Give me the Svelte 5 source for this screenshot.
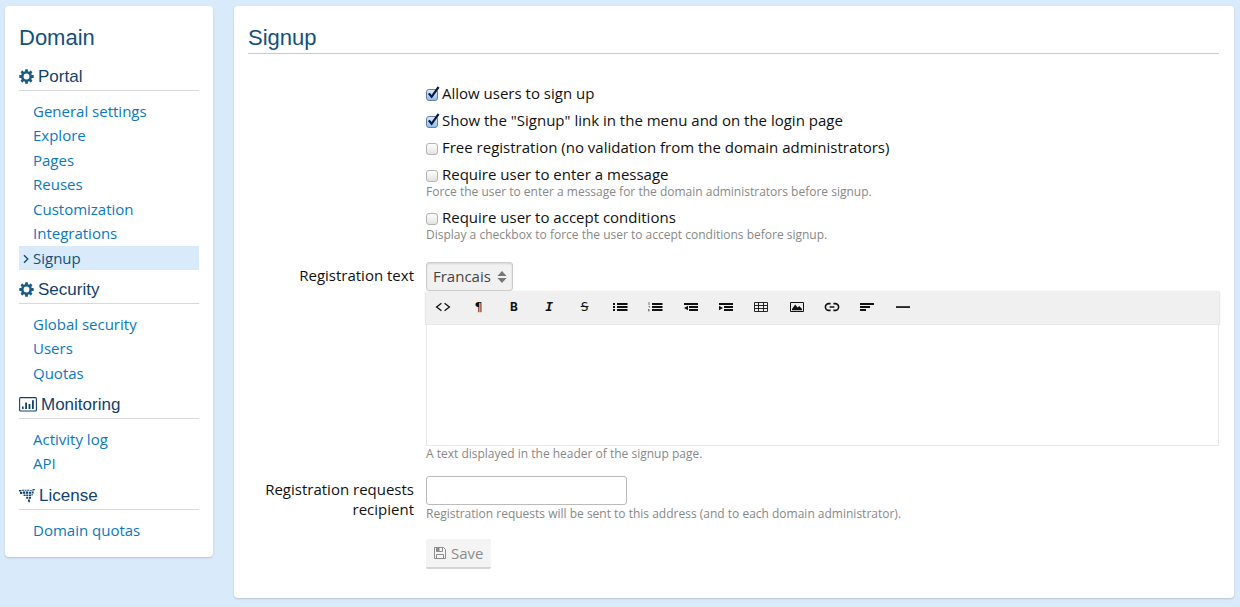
<script>
  const sections = [
    {
      title: 'Portal',
      icon: 'gear',
      items: ['General settings', 'Explore', 'Pages', 'Reuses', 'Customization', 'Integrations', 'Signup']
    },
    { title: 'Security', icon: 'gear', items: ['Global security', 'Users', 'Quotas'] },
    { title: 'Monitoring', icon: 'chart', items: ['Activity log', 'API'] },
    { title: 'License', icon: 'license', items: ['Domain quotas'] }
  ];
  const current = 'Signup';

  let options = $state([
    { id: 'allow', label: 'Allow users to sign up', checked: true },
    { id: 'link', label: 'Show the "Signup" link in the menu and on the login page', checked: true },
    { id: 'free', label: 'Free registration (no validation from the domain administrators)', checked: false },
    {
      id: 'message',
      label: 'Require user to enter a message',
      checked: false,
      help: 'Force the user to enter a message for the domain administrators before signup.'
    },
    {
      id: 'conditions',
      label: 'Require user to accept conditions',
      checked: false,
      help: 'Display a checkbox to force the user to accept conditions before signup.'
    }
  ]);

  const tools = [
    'html', 'paragraph', 'bold', 'italic', 'strike', 'bullets', 'numbers',
    'outdent', 'indent', 'table', 'image', 'link', 'align', 'rule'
  ];
  const letters = { paragraph: '¶', bold: 'B', italic: 'I', strike: 'S' };
  const teeth = [0, 45, 90, 135, 180, 225, 270, 315];
</script>

<div class="page">
  <nav class="panel sidebar">
    <h2>Domain</h2>
    {#each sections as section}
      <h3>
        {#if section.icon === 'gear'}
          <svg class="gear" width="15" height="15" viewBox="0 0 14 14" fill="currentColor">
            {#each teeth as angle}
              <rect x="5.7" y="0.2" width="2.6" height="3" rx="0.6" transform="rotate({angle} 7 7)" />
            {/each}
            <circle cx="7" cy="7" r="3.9" fill="none" stroke="currentColor" stroke-width="2.4" />
          </svg>
        {:else if section.icon === 'chart'}
          <svg width="18" height="15" viewBox="0 0 18 15" fill="currentColor">
            <rect x="0.6" y="0.6" width="16.8" height="13.4" rx="1" fill="none" stroke="currentColor" stroke-width="1.1" />
            <path d="M3 9.6h1.6v2.4H3zM6.2 5.6H8V12H6.2zM9.6 7h1.8v5H9.6zM13 3.2h1.8V12H13z" />
          </svg>
        {:else}
          <svg width="16" height="14" viewBox="0 0 16 14" fill="currentColor">
            <path d="M0 1h2.4v1.4H0zM3 .8h2v1H3zM5.6.8h2v1h-2zM8.2.8h2v1h-2zM10.8.9h2v.9h-2zM13.4.3 16 0l-.4 1.2-2.2.5zM1 2.9h2.2v2H1zM3.9 2.5h2.4v2.3H3.9zM7 2.6h2v2.2H7zM9.7 2.8H12v1.9H9.7zM12.6 2.6h2v1.8h-2zM4.6 5.5h2v1.6h-2zM7.2 5.4h2v1.9h-2zM9.9 5.4h2.2v1.9H9.9zM12.6 5h1v1.4h-1zM7.2 8h2v1.7h-2zM9.9 7.9h2.2v1.9H9.9zM9 10.6h1.9v3L9 12.6z" />
          </svg>
        {/if}
        {section.title}
      </h3>
      <ul>
        {#each section.items as item}
          <li class:active={item === current}>
            <a href="#{item}">
              {#if item === current}
                <svg class="chevron" width="6" height="10" viewBox="0 0 6 10" fill="none" stroke="currentColor" stroke-width="1.4">
                  <path d="M1 1.2 4.8 5 1 8.8" />
                </svg>
              {/if}
              {item}
            </a>
          </li>
        {/each}
      </ul>
    {/each}
  </nav>

  <main class="panel">
    <h1>Signup</h1>
    <form>
      <div class="checks">
        {#each options as option}
          <div class="check">
            <label for={option.id}>
              <span class="box">
                <input id={option.id} type="checkbox" bind:checked={option.checked} />
                {#if option.checked}
                  <svg width="14" height="14" viewBox="0 0 14 14" fill="none" stroke="#0a1a38" stroke-width="2.2">
                    <path d="M2.8 7.4 5.6 10.8 12.6 1" />
                  </svg>
                {/if}
              </span>
              {option.label}
            </label>
            {#if option.help}<p class="help">{option.help}</p>{/if}
          </div>
        {/each}
      </div>

      <label class="name" for="text">Registration text</label>
      <div class="field">
        <span class="select">
          <select aria-label="Language">
            <option>Francais</option>
          </select>
          <svg width="10" height="12" viewBox="0 0 10 12" fill="#777">
            <path d="M5 0 9.6 5H.4zM5 12 .4 7h9.2z" />
          </svg>
        </span>
        <div class="toolbar">
          <div class="tools">
            {#each tools as tool}
              <button type="button" aria-label={tool}>
                {#if letters[tool]}
                  <span class="letter {tool}">{letters[tool]}</span>
                {:else}
                  <svg width="16" height="12" viewBox="0 0 16 12" fill="currentColor">
                    {#if tool === 'html'}
                      <path d="M6.4 2.2 1.6 6l4.8 3.8M9.6 2.2 14.4 6 9.6 9.8" fill="none" stroke="currentColor" stroke-width="1.3" />
                    {:else if tool === 'bullets'}
                      <path d="M1 2h2v2H1zM1 5h2v2H1zM1 8h2v2H1zM5 2h10.5v2H5zM5 5h10.5v2H5zM5 8h10.5v2H5z" />
                    {:else if tool === 'numbers'}
                      <path d="M5 2h10.5v2H5zM5 5h10.5v2H5zM5 8h10.5v2H5z" />
                      <path d="M1.5 1h1v3h-1zM1 5h2v.7L2 7h1M1 8h2v.6H2v.8h1v.8H1z" opacity=".55" />
                    {:else if tool === 'outdent'}
                      <path d="M1 2h14v2H1zM6 5h9v2H6zM6 8h9v2H6zM5 4.8v4.4L1 7z" />
                    {:else if tool === 'indent'}
                      <path d="M1 2h14v2H1zM6 5h9v2H6zM6 8h9v2H6zM1 4.8v4.4L5 7z" />
                    {:else if tool === 'table'}
                      <path d="M1.5 1.5h13v9h-13zM1.5 4.5h13M1.5 7.5h13M5.5 1.5v9M10.5 1.5v9" fill="none" stroke="currentColor" stroke-width="0.9" />
                    {:else if tool === 'image'}
                      <path d="M1.5 1.5h13v9h-13z" fill="none" stroke="currentColor" />
                      <path d="M3 9.2V8l3.2-4.4 2.3 3 1.7-1.5L13 8v1.2z" />
                    {:else if tool === 'link'}
                      <path d="M6.6 2.6H4.8a3.4 3.4 0 0 0 0 6.8h1.8M9.4 2.6h1.8a3.4 3.4 0 0 1 0 6.8H9.4M5.6 6h4.8" fill="none" stroke="currentColor" stroke-width="1.6" />
                    {:else if tool === 'align'}
                      <path d="M1 2h14v2H1zM1 5h10v2H1zM1 8h6v2H1z" />
                    {:else}
                      <path d="M1 5.2h14v1.7H1z" />
                    {/if}
                  </svg>
                {/if}
              </button>
            {/each}
          </div>
        </div>
        <textarea id="text"></textarea>
        <p class="help">A text displayed in the header of the signup page.</p>
      </div>

      <label class="name" for="recipient">Registration requests recipient</label>
      <div class="field">
        <input id="recipient" class="text" type="text" />
        <p class="help">Registration requests will be sent to this address (and to each domain administrator).</p>
      </div>

      <button class="save" type="submit" disabled>
        <svg width="14" height="14" viewBox="0 0 14 14" fill="none" stroke="currentColor">
          <path d="M1.5 1.5h9l2 2v9h-11zM3.5 12.5v-4h7v4M3.5 1.5v4h6v-4" />
          <path d="M4 2h2.5v3H4z" fill="currentColor" stroke="none" />
        </svg>
        Save
      </button>
    </form>
  </main>
</div>

<style>
  :global(body) {
    margin: 0;
    background: #d9eafa;
  }
  .page {
    display: grid;
    grid-template-columns: 208px minmax(0, 1fr);
    align-items: start;
    gap: 21px;
    padding: 6px 6px 8px 5px;
    font: 15px/20px 'Open Sans', sans-serif;
    color: #111;
  }
  .panel {
    padding: 15px 15px 15px 14px;
    background: #fff;
    border-radius: 4px;
    box-shadow: 0 1px 2px rgba(0, 0, 0, 0.16);
  }
  h1,
  h2,
  h3 {
    margin: 0;
    font-family: 'Liberation Sans', Arial, sans-serif;
    font-weight: 400;
    color: #164f7c;
  }
  h1,
  h2 {
    padding-top: 2px;
    font-size: 22px;
    line-height: 30px;
  }
  h1 {
    border-bottom: 1px solid #ccc;
  }
  h2 {
    margin-bottom: 4px;
  }
  h3 {
    display: flex;
    align-items: center;
    gap: 4px;
    height: 27px;
    padding-top: 6px;
    margin-bottom: 8px;
    border-bottom: 1px solid #d9d9d9;
    font-size: 17px;
    line-height: 27px;
    color: #12426c;
  }
  .sidebar {
    padding-right: 14px;
  }
  .gear {
    color: #1c5a88;
  }
  ul {
    margin: 0;
    padding: 0;
    list-style: none;
  }
  li a {
    display: block;
    position: relative;
    padding-left: 14px;
    line-height: 24px;
    color: #0a78c2;
    text-decoration: none;
  }
  li:nth-child(even) {
    padding-bottom: 1px;
  }
  li.active {
    background: #d9eafa;
  }
  li.active a {
    color: #164f7c;
  }
  .chevron {
    position: absolute;
    left: 4px;
    top: 8px;
  }
  form {
    display: grid;
    grid-template-columns: 166px minmax(0, 1fr);
    column-gap: 12px;
    padding: 29px 0 14px;
  }
  .checks,
  .save {
    grid-column: 2;
  }
  .check {
    padding-bottom: 7px;
  }
  .check label {
    display: flex;
    align-items: center;
    gap: 4px;
  }
  .box {
    position: relative;
    display: flex;
    padding-top: 4px;
  }
  .box input {
    appearance: none;
    width: 12px;
    height: 12px;
    margin: 0;
    border: 1px solid #b4b4b4;
    border-radius: 3px;
    background: linear-gradient(#fff, #e2e2e2);
  }
  .box input:checked {
    border-color: #6580a8;
    background: linear-gradient(#dcebfb, #8fbdec);
  }
  .box svg {
    position: absolute;
    left: 0;
    top: 1px;
    pointer-events: none;
  }
  .help {
    margin: 0;
    font-size: 12px;
    line-height: 16px;
    color: #888;
  }
  .name {
    padding-top: 3px;
    text-align: right;
  }
  .field {
    padding-bottom: 14px;
  }
  .checks {
    padding-bottom: 12px;
  }
  .select {
    position: relative;
    display: inline-flex;
    align-items: center;
    vertical-align: top;
  }
  .select svg {
    position: absolute;
    right: 6px;
    pointer-events: none;
  }
  select {
    appearance: none;
    height: 29px;
    padding: 0 21px 2px 6px;
    border: 1px solid #ccc;
    border-radius: 3px;
    background: #f1f1f1;
    box-shadow: inset 0 1px 2px rgba(0, 0, 0, 0.12);
    color: #444;
    font: inherit;
  }
  .toolbar {
    background: #f0f0f0;
    box-shadow: 0 1px 2px rgba(0, 0, 0, 0.3);
  }
  .tools {
    display: flex;
    max-width: 495px;
  }
  .tools button {
    display: flex;
    flex: 1 1 0;
    align-items: center;
    justify-content: center;
    height: 33px;
    padding: 0 1px 2px 0;
    border: 0;
    background: none;
    color: #111;
  }
  .letter {
    font: 13px/16px 'DejaVu Sans Mono', monospace;
  }
  .bold,
  .italic {
    font-weight: 700;
  }
  .italic {
    font-style: italic;
  }
  .strike {
    text-decoration: line-through;
  }
  textarea {
    display: block;
    box-sizing: border-box;
    width: 100%;
    height: 122px;
    border: 1px solid #e8e8e8;
    resize: none;
  }
  .text {
    display: block;
    box-sizing: border-box;
    width: 201px;
    height: 29px;
    margin-bottom: 1px;
    border: 1px solid #bbb;
    border-radius: 3px;
  }
  .save {
    display: flex;
    align-items: center;
    justify-self: start;
    gap: 4px;
    height: 30px;
    margin-top: 3px;
    padding: 0 8px 0 7px;
    border: 0;
    border-bottom: 2px solid #d4d4d4;
    border-radius: 2px;
    background: #f4f4f4;
    color: #8c8c8c;
    font: inherit;
  }
</style>
